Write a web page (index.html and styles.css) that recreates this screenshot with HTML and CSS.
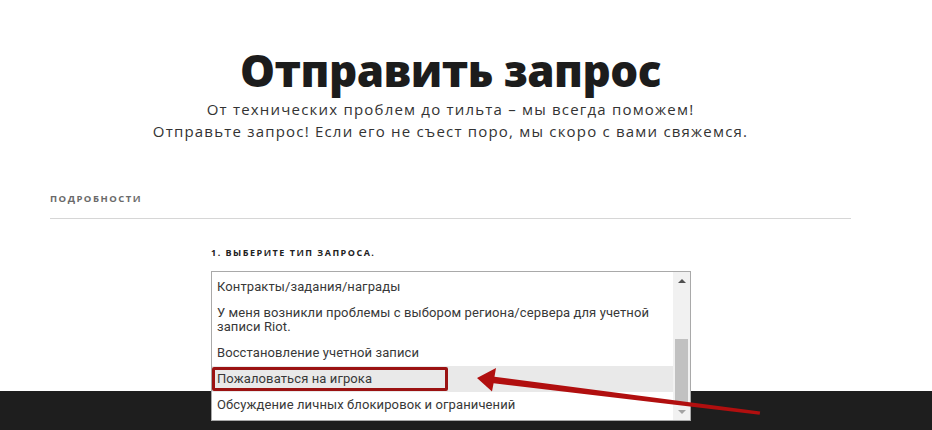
FILE: index.html
```html
<!DOCTYPE html>
<html lang="ru">
<head>
<meta charset="utf-8">
<title>Отправить запрос</title>
<link rel="stylesheet" href="styles.css">
</head>
<body>
<main class="page">
  <header class="hero">
    <h1 class="hero-title">Отправить запрос</h1>
    <p class="hero-lead">От технических проблем до тильта – мы всегда поможем!<br>Отправьте запрос! Если его не съест поро, мы скоро с вами свяжемся.</p>
  </header>
  <section class="details">
    <h2 class="details-title">ПОДРОБНОСТИ</h2>
    <div class="field">
      <label class="field-label">1. ВЫБЕРИТЕ ТИП ЗАПРОСА.</label>
      <div class="listbox">
        <ul class="options">
          <li class="option">Контракты/задания/награды</li>
          <li class="option">У меня возникли проблемы с выбором региона/сервера для учетной записи Riot.</li>
          <li class="option">Восстановление учетной записи</li>
          <li class="option option-hover">Пожаловаться на игрока<span class="mark"></span></li>
          <li class="option">Обсуждение личных блокировок и ограничений</li>
        </ul>
        <div class="scrollbar">
          <span class="sb-btn sb-up"></span>
          <div class="sb-track"><div class="sb-thumb"></div></div>
          <span class="sb-btn sb-down"></span>
        </div>
      </div>
    </div>
  </section>
</main>
<footer class="footer"></footer>
<svg class="annotation" width="932" height="430" viewBox="0 0 932 430" aria-hidden="true">
  <polygon fill="#b10f0f" points="477,378 496,368 494.5,376.8 760.2,411.4 759.6,414.8 493.6,383.2 492,391.5"/>
</svg>
</body>
</html>
```
FILE: styles.css
```css
* { box-sizing: border-box; }
html, body { margin: 0; padding: 0; }
body {
  width: 932px;
  height: 430px;
  overflow: hidden;
  background: #ffffff;
  font-family: "Open Sans", "Liberation Sans", sans-serif;
  color: #222;
  position: relative;
}
.page { display: flex; flex-direction: column; width: 901px; }
.hero { padding-top: 43px; text-align: center; }
.hero-title {
  margin: 0;
  font-family: "Open Sans", sans-serif;
  font-weight: 800;
  font-size: 44px;
  line-height: 55px;
  letter-spacing: -0.5px;
  color: #1c1c1c;
}
.hero-lead {
  margin: 0;
  font-size: 15px;
  line-height: 22px;
  letter-spacing: 1.2px;
  color: #333;
}
.details {
  margin: 51px 0 0 50px;
  width: 801px;
}
.details-title {
  margin: 0;
  padding-bottom: 13px;
  border-bottom: 1px solid #d6d6d6;
  font-size: 9.5px;
  line-height: 12px;
  font-weight: 700;
  letter-spacing: 1.5px;
  color: #6a6a6a;
}
.field {
  margin: 28px 0 -30px 161px;
  display: flex;
  flex-direction: column;
  gap: 12px;
}
.field-label {
  font-size: 9px;
  line-height: 12px;
  font-weight: 700;
  letter-spacing: 1.5px;
  color: #222;
}
.listbox {
  position: relative;
  z-index: 1;
  width: 480px;
  height: 150px;
  border: 1px solid #a9a9a9;
  background: #fff;
  display: flex;
  overflow: hidden;
}
.options {
  list-style: none;
  margin: 0;
  padding: 2px 0 0;
  flex: 1;
  font-family: Roboto, "Liberation Sans", sans-serif;
  font-size: 13px;
  line-height: 14px;
  letter-spacing: 0.1px;
  color: #383838;
}
.option {
  position: relative;
  padding: 6px 2px 6px 5px;
}
.option-hover { background: #e9e9e9; }
.mark {
  position: absolute;
  left: 0;
  top: 1px;
  width: 236px;
  height: 24px;
  border: 3px solid #9b1212;
  border-radius: 2px;
}
.scrollbar {
  width: 17px;
  background: #f1f1f1;
  display: flex;
  flex-direction: column;
}
.sb-btn {
  height: 17px;
  display: flex;
  align-items: center;
  justify-content: center;
}
.sb-up::before {
  content: "";
  border-left: 4px solid transparent;
  border-right: 4px solid transparent;
  border-bottom: 4px solid #505050;
}
.sb-down::before {
  content: "";
  border-left: 4px solid transparent;
  border-right: 4px solid transparent;
  border-top: 4px solid #a3a3a3;
}
.sb-track { flex: 1; display: flex; flex-direction: column; justify-content: flex-end; }
.sb-thumb {
  margin: 0 2px;
  height: 64px;
  background: #c1c1c1;
}
.footer {
  height: 60px;
  background: #1e1e1e;
}
.annotation {
  position: absolute;
  left: 0;
  top: 0;
  z-index: 2;
  pointer-events: none;
}
```
